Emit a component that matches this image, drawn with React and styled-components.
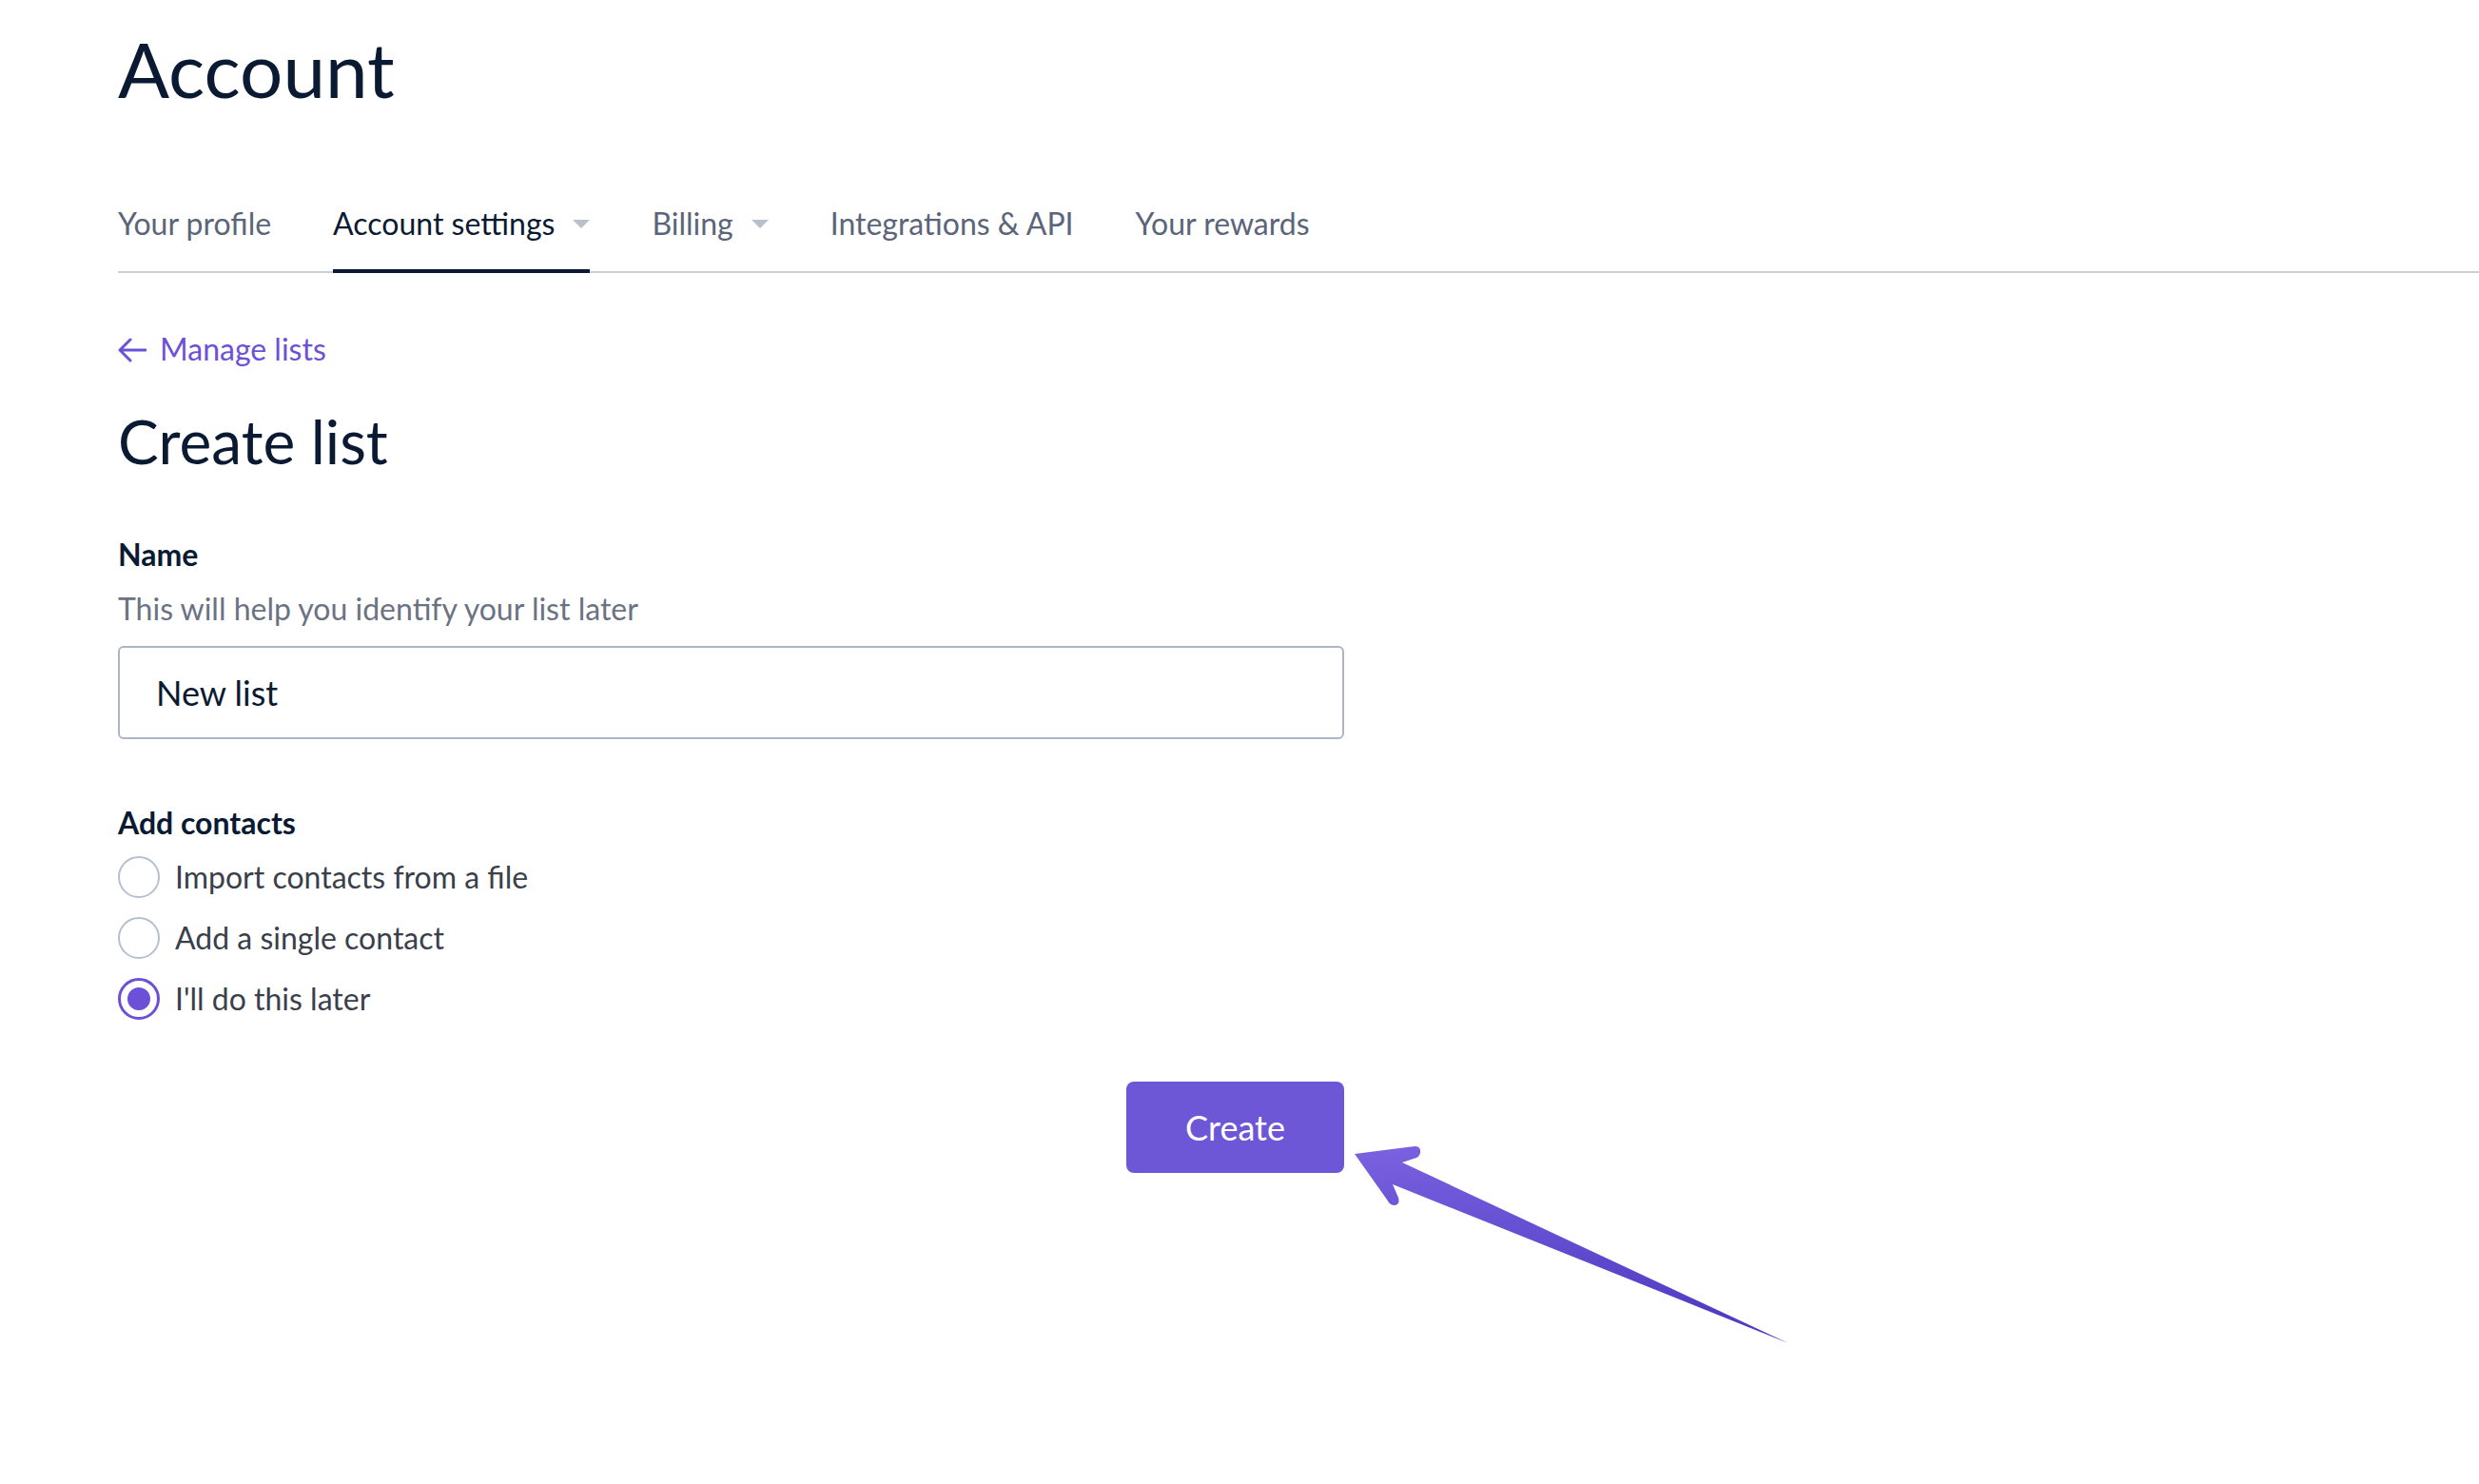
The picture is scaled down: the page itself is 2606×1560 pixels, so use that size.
import styled, { createGlobalStyle } from 'styled-components';

const GlobalStyle = createGlobalStyle`
    html, body {
        margin: 0;
        padding: 0;
        background: #ffffff;
    }
    body {
        font-family: Lato, "Open Sans", sans-serif;
        color: #0b1a33;
    }
    * {
        box-sizing: border-box;
    }
`;

const Page = styled.div`
    position: relative;
    width: 100%;
    min-height: 1560px;
    padding: 24px 0 0 124px;
    overflow: hidden;
`;

const Title = styled.h1`
    margin: 0;
    font-size: 80px;
    font-weight: 400;
    line-height: 1.2;
    color: #0b1a33;
`;

const TabBar = styled.nav`
    display: flex;
    gap: 65px;
    margin-top: 96px;
    border-bottom: 2px solid #c9d1dc;
`;

const Tab = styled.div`
    display: flex;
    align-items: center;
    gap: 19px;
    padding-bottom: 29px;
    margin-bottom: -2px;
    border-bottom: 4px solid ${(p) => (p.$active ? '#0b1a33' : 'transparent')};
    font-size: 32px;
    line-height: 1.2;
    color: ${(p) => (p.$active ? '#0b1a33' : '#5b6579')};
`;

const Caret = styled.span`
    width: 0;
    height: 0;
    border-left: 9px solid transparent;
    border-right: 9px solid transparent;
    border-top: 9px solid #b9c0cb;
`;

const Form = styled.div`
    width: 1289px;
    display: flex;
    flex-direction: column;
`;

const BackLink = styled.a`
    display: flex;
    align-items: center;
    gap: 14px;
    margin-top: 61px;
    font-size: 32px;
    line-height: 1.2;
    color: #6c51d8;
    text-decoration: none;
`;

const Heading = styled.h2`
    margin: 39px 0 0;
    font-size: 64px;
    font-weight: 400;
    line-height: 1.2;
    color: #0b1a33;
`;

const Label = styled.div`
    margin-top: ${(p) => p.$top}px;
    font-size: 32px;
    font-weight: 700;
    line-height: 1.2;
    color: #0b1a33;
`;

const Help = styled.div`
    margin-top: 19px;
    font-size: 32px;
    line-height: 1.2;
    color: #6b7382;
`;

const TextInput = styled.div`
    margin-top: 20px;
    height: 98px;
    display: flex;
    align-items: center;
    padding: 0 38px;
    border: 2px solid #aab5c5;
    border-radius: 6px;
    font-size: 36px;
    line-height: 1.2;
    color: #0b1a33;
`;

const RadioList = styled.div`
    display: flex;
    flex-direction: column;
    gap: 20px;
    margin-top: 15px;
`;

const RadioRow = styled.label`
    display: flex;
    align-items: center;
    gap: 16px;
    font-size: 32px;
    line-height: 1.2;
    color: #3a3f4b;
`;

const RadioCircle = styled.span`
    width: 44px;
    height: 44px;
    border-radius: 50%;
    border: ${(p) => (p.$checked ? '3px solid #6c51d8' : '2px solid #b5c0cf')};
    display: flex;
    align-items: center;
    justify-content: center;
    flex-shrink: 0;

    &::after {
        content: '';
        display: ${(p) => (p.$checked ? 'block' : 'none')};
        width: 24px;
        height: 24px;
        border-radius: 50%;
        background: #6c51d8;
    }
`;

const Actions = styled.div`
    display: flex;
    justify-content: flex-end;
    margin-top: 65px;
`;

const Button = styled.button`
    width: 229px;
    height: 96px;
    border: none;
    border-radius: 8px;
    background: #6e57d6;
    color: #ffffff;
    font-family: Lato, sans-serif;
    font-size: 36px;
    cursor: pointer;
`;

const Annotation = styled.svg`
    position: absolute;
    top: 0;
    left: 0;
    width: 2606px;
    height: 1560px;
    pointer-events: none;
`;

const BackArrow = () => (
    <svg width="30" height="26" viewBox="0 0 30 26" fill="none">
        <path
            d="M29 13H3M13 2L2 13L13 24"
            stroke="#6c51d8"
            strokeWidth="3"
            strokeLinecap="round"
            strokeLinejoin="round"
        />
    </svg>
);

const tabs = [
    { label: 'Your profile' },
    { label: 'Account settings', menu: true, active: true },
    { label: 'Billing', menu: true },
    { label: 'Integrations & API' },
    { label: 'Your rewards' },
];

const options = [
    { label: 'Import contacts from a file' },
    { label: 'Add a single contact' },
    { label: "I'll do this later", checked: true },
];

const App = () => {
    return (
        <Page>
            <GlobalStyle />
            <Title>Account</Title>

            <TabBar>
                {tabs.map((t) => (
                    <Tab key={t.label} $active={t.active}>
                        {t.label}
                        {t.menu && <Caret />}
                    </Tab>
                ))}
            </TabBar>

            <Form>
                <BackLink href="#">
                    <BackArrow />
                    Manage lists
                </BackLink>
                <Heading>Create list</Heading>

                <Label $top={61}>Name</Label>
                <Help>This will help you identify your list later</Help>
                <TextInput>New list</TextInput>

                <Label $top={69}>Add contacts</Label>
                <RadioList>
                    {options.map((o) => (
                        <RadioRow key={o.label}>
                            <RadioCircle $checked={o.checked} />
                            {o.label}
                        </RadioRow>
                    ))}
                </RadioList>

                <Actions>
                    <Button>Create</Button>
                </Actions>
            </Form>

            {/* callout arrow pointing at the button */}
            <Annotation viewBox="0 0 2606 1560">
                <defs>
                    <linearGradient id="arrowFill" x1="0" y1="0" x2="0.25" y2="1">
                        <stop offset="0" stopColor="#7a62e0" />
                        <stop offset="1" stopColor="#503cc4" />
                    </linearGradient>
                </defs>
                <path
                    d="M1424,1213 L1487,1205 Q1494,1205 1493,1212 Q1492,1217 1486,1218 L1474,1222 L1880,1412 L1464,1245 L1470,1259 Q1472,1266 1466,1267 Q1461,1267 1458,1261 Z"
                    fill="url(#arrowFill)"
                />
            </Annotation>
        </Page>
    );
};

export default App;
